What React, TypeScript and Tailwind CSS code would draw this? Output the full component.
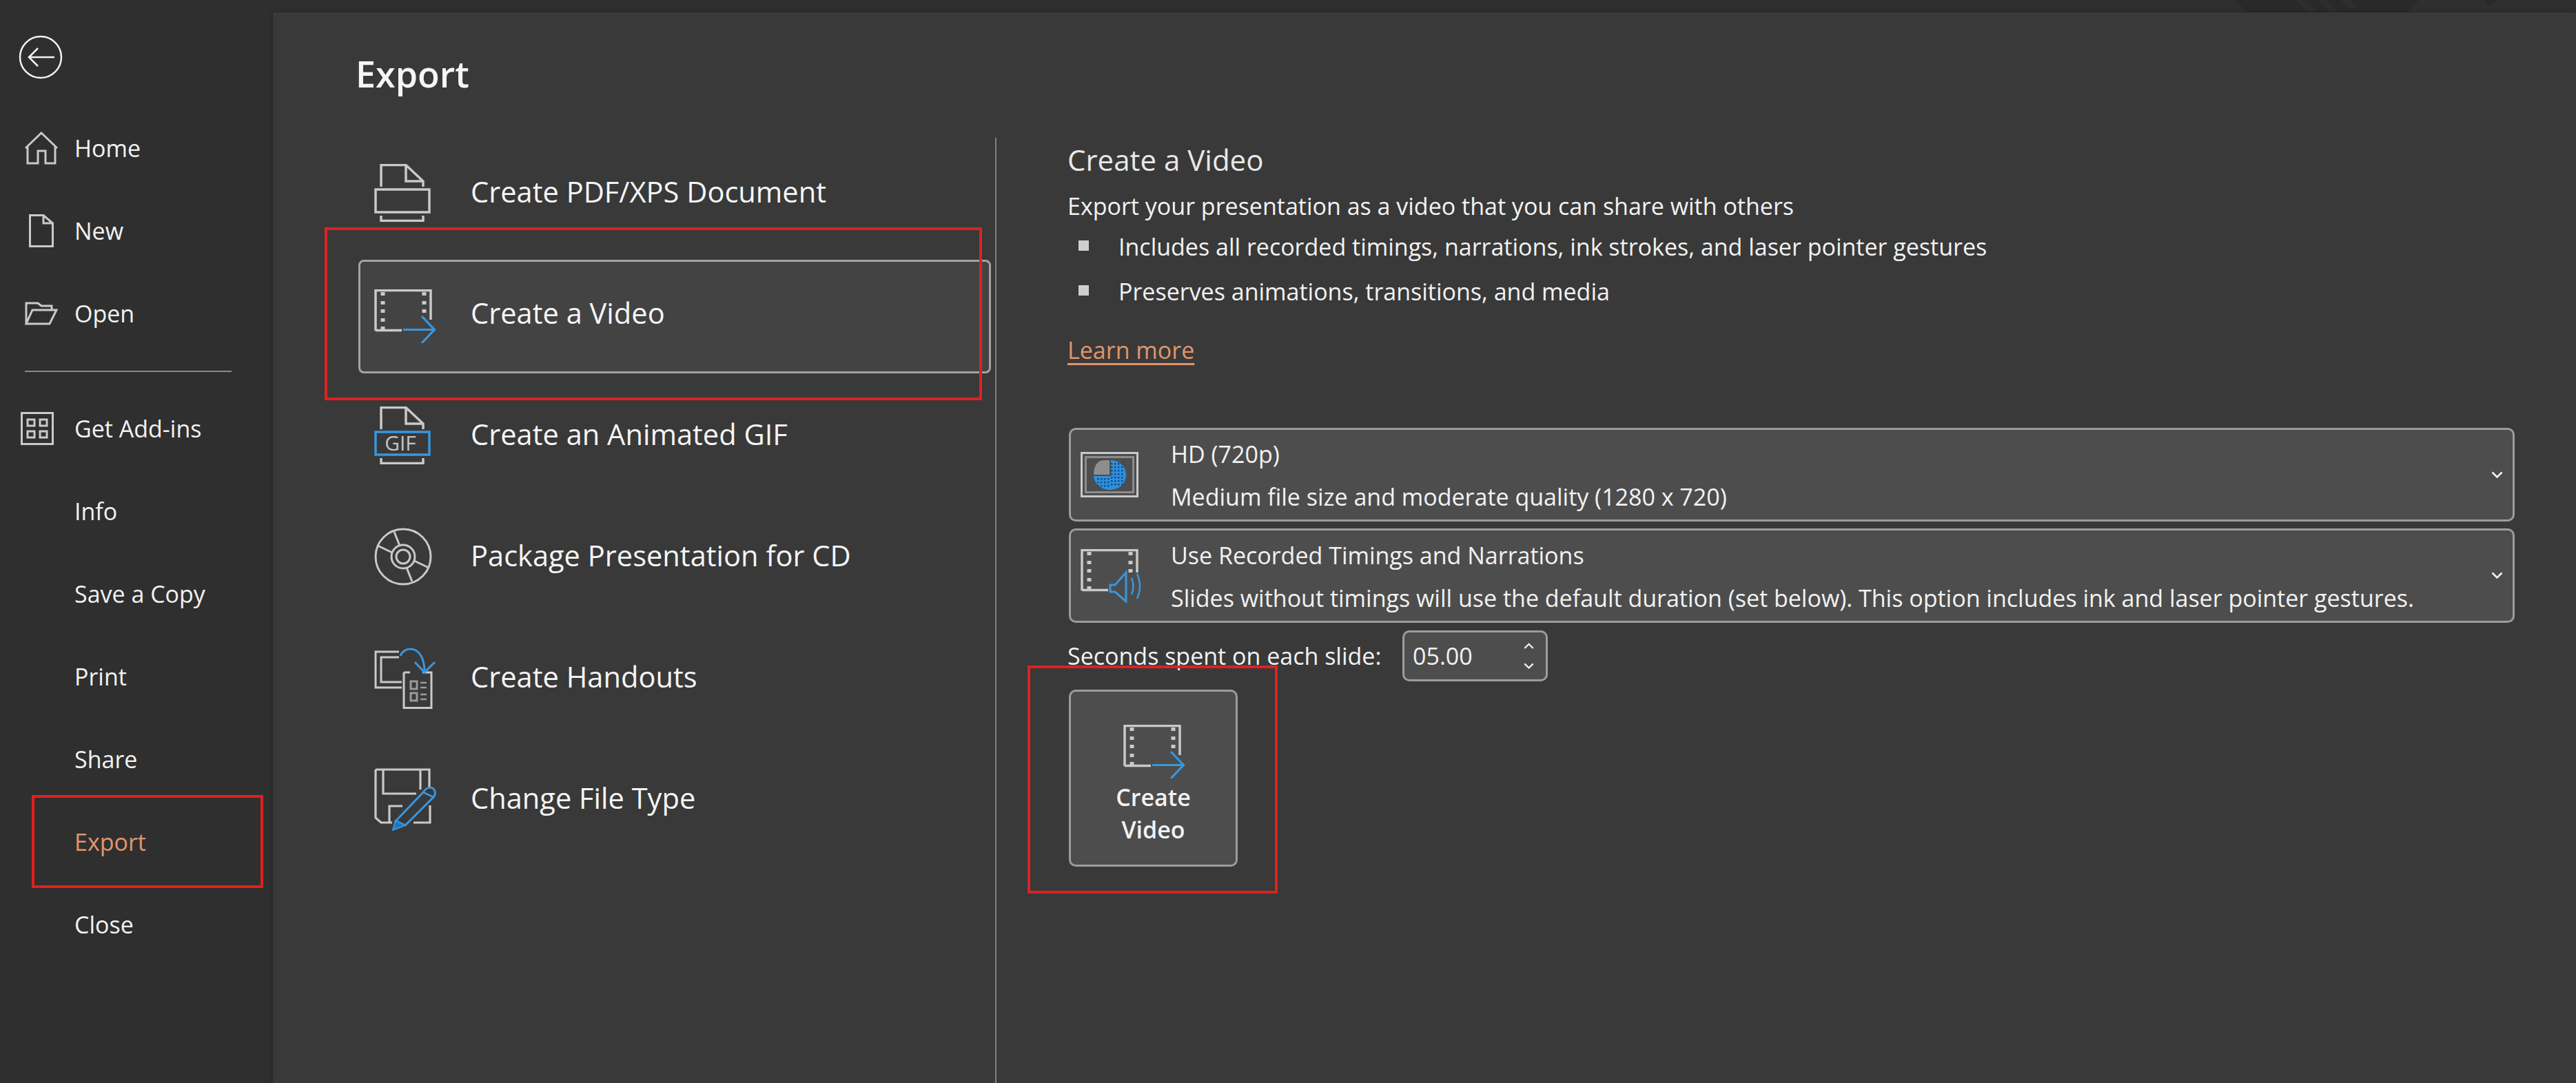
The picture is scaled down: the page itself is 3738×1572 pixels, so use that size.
import React from "react";

const G = "#c9c9c9";
const B = "#3a96dd";

function Back() {
  return (
    <svg width="64" height="64" viewBox="0 0 64 64" fill="none">
      <circle cx="32" cy="32" r="30" stroke="#f2f2f2" strokeWidth="2.5" />
      <path d="M15 32H52M28 19L15 32L28 45" stroke="#f2f2f2" strokeWidth="2.5" />
    </svg>
  );
}
function Home() {
  return (
    <svg width="48" height="48" viewBox="0 0 48 48" fill="none" stroke={G} strokeWidth="3">
      <path d="M1 24L24 2L47 24M4 21V46H19V28H30V46H44V21" />
    </svg>
  );
}
function NewDoc() {
  return (
    <svg width="36" height="48" viewBox="0 0 36 48" fill="none" stroke={G} strokeWidth="3">
      <path d="M1.5 1.5H21L34.5 13V46.5H1.5ZM21 1.5V13H34.5" />
    </svg>
  );
}
function Open() {
  return (
    <svg width="48" height="34" viewBox="0 0 48 34" fill="none" stroke={G} strokeWidth="3">
      <path d="M2 32V2H19L24 6H39V12M2 32H36L46 12H11L2 32Z" />
    </svg>
  );
}
function Addins() {
  return (
    <svg width="48" height="48" viewBox="0 0 48 48" fill="none" stroke={G} strokeWidth="3">
      <rect x="1.5" y="1.5" width="45" height="45" />
      <rect x="10" y="11" width="10" height="9" />
      <rect x="28" y="11" width="10" height="9" />
      <rect x="10" y="28" width="10" height="9" />
      <rect x="28" y="28" width="10" height="9" />
    </svg>
  );
}
function PageTop() {
  return <path d="M10 33V1.5H46L71 25V33M46 1.5V25H71M10 75V82.5H71V75" stroke={G} strokeWidth="3.5" fill="none" />;
}
function Pdf() {
  return (
    <svg width="82" height="84" viewBox="0 0 82 84" fill="none">
      <PageTop />
      <rect x="2" y="37" width="78" height="33" stroke={G} strokeWidth="3.5" />
    </svg>
  );
}
function Gif() {
  return (
    <svg width="82" height="84" viewBox="0 0 82 84" fill="none">
      <PageTop />
      <rect x="2" y="37" width="78" height="33" stroke={B} strokeWidth="3.5" />
      <text x="38" y="64" textAnchor="middle" fontSize="30" fill="#c4c4c4" fontFamily="Open Sans, sans-serif">GIF</text>
    </svg>
  );
}
function VideoFrame({ cut }: { cut: number }) {
  const dots = [4, 17, 29, 42, 54];
  return (
    <g>
      <path d={`M2 60V1.5H82V${cut}M2 59.5H40`} stroke={G} strokeWidth="3.5" fill="none" />
      {dots.map((y) => (
        <rect key={y} x="9.5" y={y} width="6" height="5" fill={G} />
      ))}
      {dots.slice(0, 3).map((y) => (
        <rect key={y} x="69.5" y={y} width="6" height="5" fill={G} />
      ))}
    </g>
  );
}
function Video() {
  return (
    <svg width="90" height="78" viewBox="0 0 90 78" fill="none">
      <VideoFrame cut={44} />
      <path d="M42 58.5H87M69 39L87.5 58.5L69 78" stroke={B} strokeWidth="3.2" />
    </svg>
  );
}
function VideoAudio() {
  return (
    <svg width="90" height="78" viewBox="0 0 90 78" fill="none">
      <VideoFrame cut={34} />
      <path d="M43 52H50L66 34V76L50 62H43Z" stroke={B} strokeWidth="3" />
      <path d="M74 42Q79 54 74 66M82 36Q90 54 82 72" stroke={B} strokeWidth="2.5" />
    </svg>
  );
}
function Cd() {
  return (
    <svg width="84" height="84" viewBox="0 0 84 84" fill="none" stroke={G} strokeWidth="3">
      <circle cx="42" cy="42" r="40" />
      <circle cx="42" cy="42" r="17" />
      <circle cx="42" cy="42" r="10" />
      <path d="M29 6L37 26M5 26L26 36M79 58L58 48M55 78L47 58" />
    </svg>
  );
}
function Handouts() {
  return (
    <svg width="90" height="90" viewBox="0 0 90 90" fill="none">
      <path d="M36 7H2V59H40M36 15H10V51H40" stroke={G} strokeWidth="3" />
      <path d="M43 37V88.5H83V37H70M43 37H52" stroke={G} strokeWidth="3" />
      <rect x="53" y="50" width="9" height="11" stroke="#9a9a9a" strokeWidth="3" />
      <rect x="53" y="67" width="9" height="11" stroke="#9a9a9a" strokeWidth="3" />
      <path d="M67 52H76M67 59H76M67 69H76M67 76H76" stroke="#9a9a9a" strokeWidth="2.5" />
      <path d="M38 13C44 -3 73 -3 73 36M59 22L73 37L88 22" stroke={B} strokeWidth="3" />
    </svg>
  );
}
function FileType() {
  return (
    <svg width="90" height="91" viewBox="0 0 90 91" fill="none">
      <path d="M2 2H80V29M2 2V72L10 79H26M13 2V37H61M67 2V31M22 79V55H41M81 54V79H57" stroke={G} strokeWidth="3.2" />
      <path d="M31 77L72 34C76 27 86 26 88 34C89 37 88 39 87 41L45 83Z" stroke={B} strokeWidth="3" fill="#393939" />
      <path d="M71 35L86 42" stroke={B} strokeWidth="2.5" />
      <path d="M27 90L31 76L45 83Z" fill="#1478c8" stroke={B} strokeWidth="2" />
    </svg>
  );
}
function HdIcon() {
  const dots: [number, number][] = [];
  for (let x = 44; x < 60; x += 5) for (let y = 16; y < 50; y += 5) dots.push([x, y]);
  for (let x = 24; x < 44; x += 5) for (let y = 38; y < 50; y += 5) dots.push([x, y]);
  return (
    <svg width="84" height="66" viewBox="0 0 84 66" fill="none">
      <rect x="1.5" y="1.5" width="81" height="63" stroke={G} strokeWidth="3" />
      <rect x="7.5" y="7.5" width="69" height="51" stroke="#8c8c8c" strokeWidth="3" />
      <path d="M42 12H34C24 12 19 21 19 33H42Z" fill="#8e8e8e" />
      <path d="M44 12C56 12 66 21 66 33C66 46 56 55 42 55C30 55 20 46 19 35H44Z" fill="#2f8fdc" />
      {dots.map(([x, y]) => (
        <rect key={`${x}-${y}`} x={x} y={y} width="2.5" height="2.5" fill="#10508a" />
      ))}
    </svg>
  );
}
function TopDecor() {
  return (
    <svg className="absolute left-[3240px] top-0" width="400" height="18" viewBox="0 0 400 18" fill="none">
      <path d="M2 0L22 18H252L270 0Z" fill="#292929" />
      <path d="M92 0L108 17H122L104 0ZM124 0L140 18H154L136 0ZM156 0L172 14L180 10L170 0Z" fill="#2e2e2e" />
      <path d="M365 0L373 10L383 0Z" fill="#292929" />
    </svg>
  );
}

const side = ["Home", "New", "Open"];
const sideIcons = [<Home key="h" />, <NewDoc key="n" />, <Open key="o" />];
const lower = ["Info", "Save a Copy", "Print", "Share", "Export", "Close"];

function SideRow({ label, icon, pl, active }: { label: string; icon?: React.ReactNode; pl: string; active?: boolean }) {
  return (
    <div className="h-[120px] flex items-center shrink-0">
      <div className={`w-[108px] shrink-0 flex ${pl}`}>{icon}</div>
      <span className={`text-[34px] ${active ? "text-[#e2956b]" : "text-[#f2f2f2]"}`}>{label}</span>
    </div>
  );
}

const items: [string, React.ReactNode][] = [
  ["Create PDF/XPS Document", <Pdf key="p" />],
  ["Create a Video", <Video key="v" />],
  ["Create an Animated GIF", <Gif key="g" />],
  ["Package Presentation for CD", <Cd key="c" />],
  ["Create Handouts", <Handouts key="h" />],
  ["Change File Type", <FileType key="f" />],
];

function Chevron({ up, w = 17 }: { up?: boolean; w?: number }) {
  return (
    <svg width={w} height={w * 0.62} viewBox="0 0 17 10.5" fill="none">
      <path d={up ? "M1.5 9L8.5 2L15.5 9" : "M1.5 1.5L8.5 8.5L15.5 1.5"} stroke="#f2f2f2" strokeWidth="2.6" />
    </svg>
  );
}

function Dropdown({ icon, a, b, h }: { icon: React.ReactNode; a: string; b: string; h: string }) {
  return (
    <div className={`${h} border-[3px] border-[#9c9c9c] rounded-[10px] bg-[#4d4d4d] flex items-center text-[34px] text-[#f2f2f2]`}>
      <div className="w-[145px] pl-[14px] shrink-0 flex">{icon}</div>
      <div className="flex-1 flex flex-col pt-[2px] leading-[62px] whitespace-nowrap">
        <span>{a}</span>
        <span>{b}</span>
      </div>
      <div className="pr-[14px]">
        <Chevron />
      </div>
    </div>
  );
}

export default function App() {
  return (
    <div className="relative w-[3738px] h-[1572px] overflow-hidden flex bg-[#2f2f2f] font-['Open_Sans',sans-serif]">
      <TopDecor />
      <aside className="w-[396px] shrink-0 flex flex-col pt-[51px]">
        <div className="pl-[27px] h-[64px] mb-[40px]">
          <Back />
        </div>
        {side.map((s, i) => (
          <SideRow key={s} label={s} icon={sideIcons[i]} pl={i === 1 ? "pl-[42px]" : "pl-[36px]"} />
        ))}
        <div className="h-[47px] flex items-center shrink-0 pl-[36px]">
          <div className="w-[300px] h-[2px] bg-[#8a8a8a]" />
        </div>
        <SideRow label="Get Add-ins" icon={<Addins />} pl="pl-[30px]" />
        {lower.map((s) => (
          <SideRow key={s} label={s} pl="" active={s === "Export"} />
        ))}
      </aside>

      <main className="relative flex-1 mt-[18px] bg-[#393939] shadow-[0_0_6px_rgba(0,0,0,0.3)] flex flex-col min-w-0">
        <h1 className="h-[182px] shrink-0 pl-[120px] pt-[56px] text-[52px] leading-[66px] font-semibold text-[#f5f5f5]">Export</h1>
        <div className="flex-1 flex min-h-0">
          <div className="w-[1050px] shrink-0 border-r-[2px] border-[#808080] pl-[124px] pr-[6px]">
            <div className="-mt-[8px]">
              {items.map(([label, icon], i) => (
                <div key={label} className="h-[176px] flex items-center">
                  <div
                    className={`w-full flex items-center text-[41.6px] text-[#f5f5f5] ${
                      i === 1 ? "h-[165px] border-[3px] border-[#a3a3a3] rounded-[8px] bg-[#434343] pl-[20px] mt-[6px]" : "h-full pl-[23px]"
                    }`}
                  >
                    <div className="w-[140px] shrink-0 flex">{icon}</div>
                    <span className={i === 1 ? "-mt-[9px]" : "-mt-[3px]"}>{label}</span>
                  </div>
                </div>
              ))}
            </div>
          </div>

          <div className="flex-1 pl-[105px] pr-[89px] pt-[7px] text-[#f2f2f2] text-[34px] min-w-0">
            <h2 className="-ml-[2px] text-[42px] leading-[50px] font-medium text-[#e8e8e8]">Create a Video</h2>
            <p className="-ml-[2px] mt-[20px] leading-[44px]">Export your presentation as a video that you can share with others</p>
            <ul className="mt-[15px] flex flex-col gap-[21px]">
              <li className="flex items-center leading-[44px]">
                <span className="w-[15px] h-[15px] bg-[#cfcfcf] ml-[14px] mr-[43px] -mt-[4px]" />
                Includes all recorded timings, narrations, ink strokes, and laser pointer gestures
              </li>
              <li className="flex items-center leading-[44px]">
                <span className="w-[15px] h-[15px] bg-[#cfcfcf] ml-[14px] mr-[43px] -mt-[4px]" />
                Preserves animations, transitions, and media
              </li>
            </ul>
            <a className="-ml-[2px] block mt-[41px] leading-[44px] text-[#e2956b] underline underline-offset-[6px]">Learn more</a>
            <div className="mt-[91px] flex flex-col gap-[10px]">
              <Dropdown h="h-[136px]" icon={<HdIcon />} a="HD (720p)" b="Medium file size and moderate quality (1280 x 720)" />
              <Dropdown
                h="h-[137px]"
                icon={<VideoAudio />}
                a="Use Recorded Timings and Narrations"
                b="Slides without timings will use the default duration (set below). This option includes ink and laser pointer gestures."
              />
            </div>
            <div className="mt-[11px] h-[74px] flex items-center">
              <span className="-ml-[2px] w-[486px] shrink-0">Seconds spent on each slide:</span>
              <div className="w-[211px] h-[74px] border-[3px] border-[#9c9c9c] rounded-[10px] bg-[#4d4d4d] flex items-center pl-[12px] pr-[17px]">
                <span className="flex-1">05.00</span>
                <div className="flex flex-col gap-[20px] items-center">
                  <Chevron up w={15} />
                  <Chevron w={15} />
                </div>
              </div>
            </div>
            <div className="mt-[12px] w-[245px] h-[257px] border-[3px] border-[#9c9c9c] rounded-[10px] bg-[#4d4d4d] flex flex-col items-center pt-[48px]">
              <div className="pl-[3px]">
                <Video />
              </div>
              <div className="mt-[4px] text-center text-[34px] leading-[47px] font-semibold">
                Create
                <br />
                Video
              </div>
            </div>
          </div>
        </div>
      </main>

      <div className="absolute left-[46px] top-[1154px] w-[336px] h-[135px] border-[4px] border-[#e02020]" />
      <div className="absolute left-[471px] top-[330px] w-[954px] h-[251px] border-[4px] border-[#e02020]" />
      <div className="absolute left-[1491px] top-[966px] w-[363px] h-[331px] border-[4px] border-[#e02020]" />
    </div>
  );
}
